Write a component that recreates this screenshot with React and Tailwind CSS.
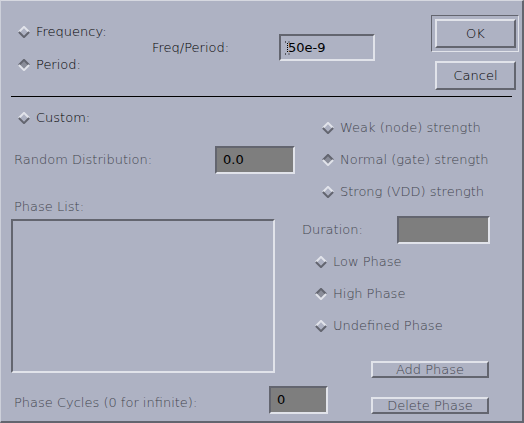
import React from 'react';

// CDE / Motif palette
const LIGHT = '#e1e3ea';
const DARK = '#63656f';

function Diamond({ selected }) {
  return (
    <svg width="12" height="12" viewBox="0 0 12 12" className="shrink-0">
      <polygon points="6,0.5 11.5,6 6,11.5 0.5,6" fill={selected ? '#8a8d99' : '#aeb2c3'} />
      <polyline points="0.9,6 6,0.9 11.1,6" fill="none" stroke={selected ? DARK : LIGHT} strokeWidth="2" />
      <polyline points="0.9,6 6,11.1 11.1,6" fill="none" stroke={selected ? LIGHT : DARK} strokeWidth="2" />
    </svg>
  );
}

function Radio({ label, selected, disabled, gap = 'gap-[6px]' }) {
  return (
    <div className={`flex items-center h-4 ${gap}`}>
      <Diamond selected={selected} />
      <span className={disabled ? 'text-[#43454e]' : 'text-black'}>{label}</span>
    </div>
  );
}

function Field({ value, className }) {
  return (
    <div
      className={`shrink-0 flex items-center pl-[6px] border-2 border-t-[#63656f] border-l-[#63656f] border-b-[#e1e3ea] border-r-[#e1e3ea] bg-[#7e7e7e] text-black font-normal ${className}`}
    >
      {value}
    </div>
  );
}

function SmallButton({ label }) {
  return (
    <div className="w-[118px] h-[17px] flex items-center justify-center border-2 border-t-[#e1e3ea] border-l-[#e1e3ea] border-b-[#63656f] border-r-[#63656f] text-[#43454e] leading-none">
      {label}
    </div>
  );
}

export default function App() {
  return (
    <div
      className="w-[524px] h-[423px] bg-[#aeb2c3] border-t border-l border-t-[#d6d8e0] border-l-[#cdd0da] border-r-2 border-b-2 border-r-[#63656f] border-b-[#63656f] text-[13px] leading-4 font-light overflow-hidden"
      style={{ fontFamily: '"DejaVu Sans", Verdana, sans-serif' }}
    >
      {/* top: frequency / period */}
      <div className="flex h-[95px]">
        <div className="w-[151px] shrink-0 pl-[17px] pt-[23px] flex flex-col gap-[17px]">
          <Radio label="Frequency:" />
          <Radio label="Period:" selected />
        </div>
        <div className="flex items-center h-[27px] mt-[33px]">
          <span className="w-[127px] shrink-0">Freq/Period:</span>
          <div className="w-[96px] h-[27px] shrink-0 flex items-center pl-[4px] border-2 border-t-[#63656f] border-l-[#63656f] border-b-[#e1e3ea] border-r-[#e1e3ea] font-normal">
            <svg width="5" height="14" viewBox="0 0 5 14" className="mr-[-2px]">
              <path d="M0 1h1.5M3.5 1h1.5M2.5 2v10M0 13h1.5M3.5 13h1.5" stroke="#000" strokeWidth="1" strokeDasharray="1 1" />
            </svg>
            <span>50e-9</span>
          </div>
        </div>
        <div className="ml-[56px] mt-[14px] flex flex-col">
          <div className="w-[88px] h-[37px] p-[3px] border border-t-[#63656f] border-l-[#63656f] border-b-[#e1e3ea] border-r-[#e1e3ea]">
            <div className="w-[81px] h-[29px] flex items-center justify-center border-2 border-t-[#e1e3ea] border-l-[#e1e3ea] border-b-[#63656f] border-r-[#63656f]">
              OK
            </div>
          </div>
          <div className="ml-[4px] mt-[9px] w-[81px] h-[29px] flex items-center justify-center border-2 border-t-[#e1e3ea] border-l-[#e1e3ea] border-b-[#63656f] border-r-[#63656f]">
            Cancel
          </div>
        </div>
      </div>

      <div className="ml-[10px] w-[501px] h-px bg-black" />

      {/* custom section */}
      <div className="flex">
        <div className="w-[274px] shrink-0 flex flex-col">
          <div className="mt-[13px] pl-[17px]">
            <Radio label="Custom:" />
          </div>
          <div className="mt-[20px] flex items-center">
            <span className="pl-[13px] w-[214px] shrink-0 text-[#43454e]">Random Distribution:</span>
            <Field value="0.0" className="w-[80px] h-[28px]" />
          </div>
          <div className="mt-[25px] pl-[13px] text-[#43454e]">Phase List:</div>
          <div className="mt-[4px] ml-[10px] w-[264px] h-[154px] border-2 border-t-[#63656f] border-l-[#63656f] border-b-[#e1e3ea] border-r-[#e1e3ea]" />
        </div>

        <div className="flex flex-col">
          <div className="mt-[23px] pl-[47px] flex flex-col gap-[16px]">
            <Radio label="Weak (node) strength" disabled />
            <Radio label="Normal (gate) strength" selected disabled />
            <Radio label="Strong (VDD) strength" disabled />
          </div>
          <div className="mt-[16px] pl-[27px] flex items-center">
            <span className="w-[95px] shrink-0 text-[#43454e]">Duration:</span>
            <Field value="" className="w-[93px] h-[28px]" />
          </div>
          <div className="mt-[10px] pl-[40px] flex flex-col gap-[16px]">
            <Radio label="Low Phase" disabled />
            <Radio label="High Phase" selected disabled />
            <Radio label="Undefined Phase" disabled />
          </div>
          <div className="mt-[27px] pl-[96px]">
            <SmallButton label="Add Phase" />
          </div>
        </div>
      </div>

      {/* bottom row */}
      <div className="flex items-start">
        <span className="mt-[17px] pl-[13px] w-[268px] shrink-0 text-[#43454e]">Phase Cycles (0 for infinite):</span>
        <Field value="0" className="mt-[8px] w-[59px] h-[28px]" />
        <div className="ml-[43px] mt-[19px]">
          <SmallButton label="Delete Phase" />
        </div>
      </div>
    </div>
  );
}
